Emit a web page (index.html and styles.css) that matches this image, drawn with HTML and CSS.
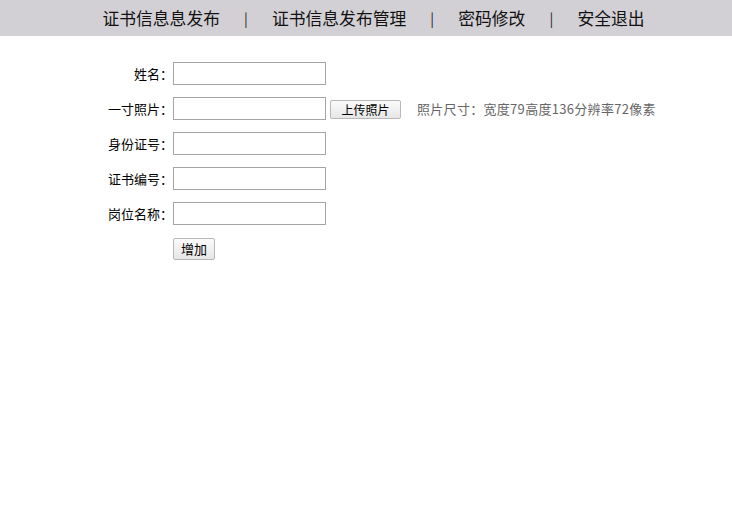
FILE: index.html
```html
<!DOCTYPE html>
<html lang="zh-CN">
<head>
<meta charset="utf-8">
<title>证书信息管理</title>
<link rel="stylesheet" href="styles.css">
</head>
<body>
<div class="topbar">
  <nav class="nav">
    <a class="nav-link" href="#">证书信息息发布</a>
    <span class="sep">|</span>
    <a class="nav-link" href="#">证书信息发布管理</a>
    <span class="sep">|</span>
    <a class="nav-link" href="#">密码修改</a>
    <span class="sep">|</span>
    <a class="nav-link" href="#">安全退出</a>
  </nav>
</div>
<form class="form">
  <div class="row">
    <label class="label">姓名：</label>
    <input class="field" type="text">
  </div>
  <div class="row">
    <label class="label">一寸照片：</label>
    <input class="field" type="text">
    <button class="btn btn-upload" type="button">上传照片</button>
    <span class="note">照片尺寸：宽度79高度136分辨率72像素</span>
  </div>
  <div class="row">
    <label class="label">身份证号：</label>
    <input class="field" type="text">
  </div>
  <div class="row">
    <label class="label">证书编号：</label>
    <input class="field" type="text">
  </div>
  <div class="row">
    <label class="label">岗位名称：</label>
    <input class="field" type="text">
  </div>
  <div class="row">
    <span class="label"></span>
    <button class="btn btn-add" type="button">增加</button>
  </div>
</form>
</body>
</html>
```
FILE: styles.css
```css
html, body {
  margin: 0;
  padding: 0;
  background: #ffffff;
  font-family: "Noto Sans CJK SC", "DejaVu Sans", sans-serif;
  color: #000;
}
.topbar {
  height: 36px;
  background: #d3d0d5;
  display: flex;
  align-items: center;
  justify-content: center;
}
.nav {
  display: flex;
  align-items: center;
  gap: 23px;
  font-size: 16.8px;
  line-height: 20px;
  margin-left: 15px;
}
.nav-link {
  color: #111;
  text-decoration: none;
}
.sep {
  width: 6px;
  text-align: center;
  font-size: 14px;
  color: #222;
}
.form {
  margin: 26px 0 0 0;
  display: flex;
  flex-direction: column;
  gap: 12px;
}
.row {
  display: flex;
  align-items: center;
  height: 23px;
  font-size: 13px;
}
.label {
  width: 173px;
  text-align: right;
  flex: none;
}
.field {
  width: 153px;
  height: 23px;
  box-sizing: border-box;
  border: 1px solid #a5a5a5;
  background: #fff;
  margin: 0;
  padding: 0 2px;
}
.btn {
  font-family: "Noto Sans CJK SC", "DejaVu Sans", sans-serif;
  font-size: 12px;
  box-sizing: border-box;
  margin: 0;
  padding: 0;
  color: #000;
  background: linear-gradient(#fbfbfb, #e6e6e6);
  border: 1px solid #b8b8b8;
  border-radius: 2px;
}
.btn-upload {
  width: 71px;
  height: 19px;
  line-height: 16px;
  margin-left: 4px;
  margin-top: 2px;
}
.btn-add {
  width: 42px;
  height: 22px;
  font-size: 13px;
  line-height: 18px;
}
.note {
  margin-left: 16px;
  font-size: 13px;
  letter-spacing: 0.3px;
  color: #666;
}
```
